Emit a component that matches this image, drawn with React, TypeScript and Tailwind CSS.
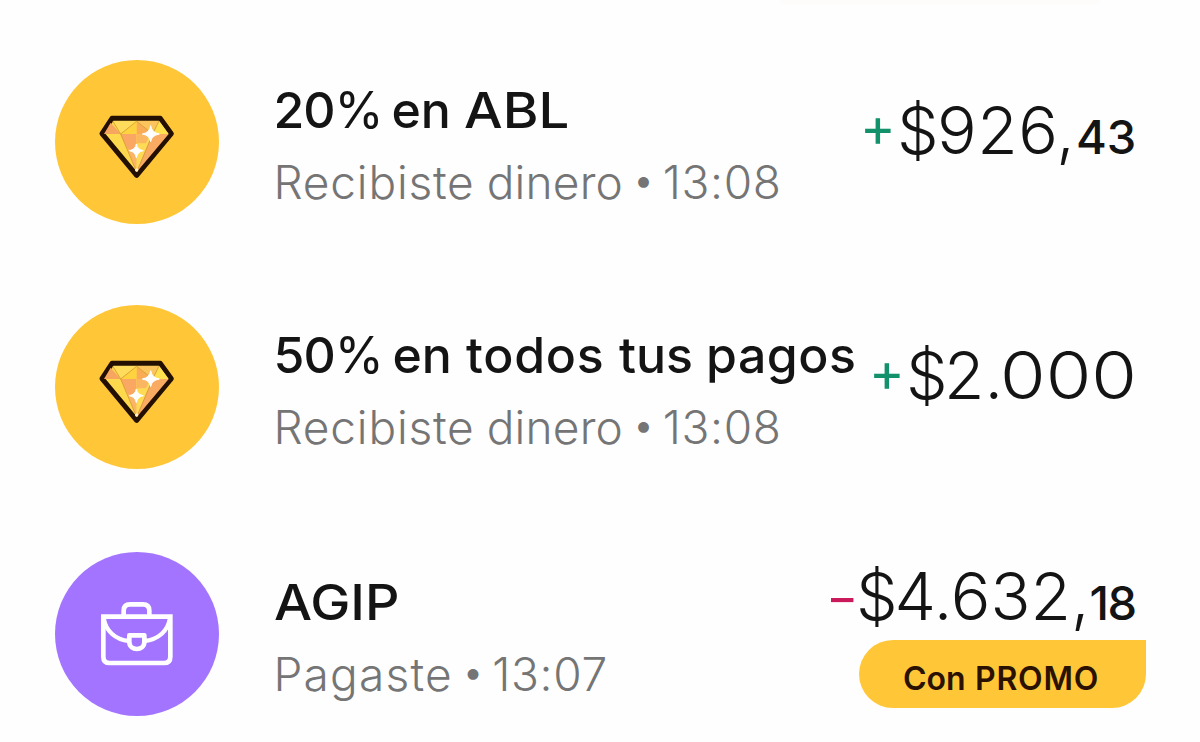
import type { ReactNode } from 'react'

function DiamondIcon() {
  return (
    <svg viewBox="0 0 285 255" className="mt-[12px] h-[85px] w-[95px]">
      <path d="M66 37H211L244 83L140 208L36 83Z" fill="#ffd94d" stroke="#241003" strokeWidth="15" strokeLinejoin="round" />
      <path d="M62 50L92 84H42Z" fill="#f7a660" />
      <path d="M70 45H140L92 84Z" fill="#ffdc5c" />
      <path d="M140 47V84H92Z" fill="#ffd23f" />
      <path d="M140 47L188 84H140Z" fill="#faab55" />
      <path d="M140 45H206L188 84Z" fill="#fbc45c" />
      <path d="M208 46L236 84H188Z" fill="#ffe04e" />
      <path d="M92 84H140V140L112 128Z" fill="#faa764" />
      <path d="M112 128L140 140V198Z" fill="#fcb568" />
      <path d="M140 84H188L140 198Z" fill="#ffdb55" />
      <path d="M140 84H182L168 112L140 112Z" fill="#fbb662" />
      <path d="M188 84H236L140 198Z" fill="#faab62" />
      <path d="M68 45L92 84L140 198L188 84L207 45M92 84L140 46L188 84" fill="none" stroke="#c98a2c" strokeWidth="2" />
      <path d="M182 59Q185 80 208 84Q185 88 182 107Q179 88 157 84Q179 80 182 59Z" fill="#fff" stroke="#fff" strokeWidth="3" />
      <path d="M139 114Q142 131 160 134Q142 137 139 155Q136 137 118 134Q136 131 139 114Z" fill="#fff" stroke="#fff" strokeWidth="3" />
      <circle cx="140" cy="192" r="5" fill="#fff3c4" />
    </svg>
  )
}

function BriefcaseIcon() {
  return (
    <svg viewBox="0 0 315 270" className="mt-[2px] h-[90px] w-[105px]" fill="none" stroke="#fff" strokeWidth="14" strokeLinejoin="round">
      <path d="M55 80H256V200Q256 219 237 219H74Q55 219 55 200Z" strokeLinejoin="miter" />
      <path d="M116 78V62Q116 43 135 43H174Q193 43 193 62V78" />
      <path d="M56 84C62 122 90 149 132 153M255 84C249 122 221 149 178 153" strokeWidth="13" />
      <path d="M133 136H178V156C178 184 133 184 133 156Z" />
    </svg>
  )
}

function Row({ height, circle, icon, title, subtitle, children }: {
  height: string
  circle: string
  icon: ReactNode
  title: ReactNode
  subtitle: ReactNode
  children: ReactNode
}) {
  return (
    <li className={`flex items-start pl-[55px] ${height}`}>
      <div className={`flex size-[164px] shrink-0 items-center justify-center rounded-full ${circle}`}>{icon}</div>
      <div className="ml-[54.5px] min-w-0 flex-1 pt-5">
        <h2 className="flex text-[50px] leading-[60px] font-medium text-[#141414]">{title}</h2>
        <p className="mt-3 flex text-[46px] leading-[60px] font-light text-[#757575]">{subtitle}</p>
      </div>
      {children}
    </li>
  )
}

const word = 'shrink-0'

function Bullet() {
  return <span className={`${word} w-[29.5px] -translate-x-px -translate-y-[2px] text-[40px]`}>•</span>
}

function Received() {
  return (
    <>
      <span className={`${word} w-[213.2px] tracking-[0.8px]`}>Recibiste</span>
      <span className={`${word} w-[146.5px] tracking-[0.2px]`}>dinero</span>
      <Bullet />
      <span className={`${word} tracking-[0.7px]`}>13:08</span>
    </>
  )
}

export default function App() {
  return (
    <main className="h-[742px] w-[1200px] overflow-hidden bg-[#fefefe] font-['Inter',sans-serif]">
      <div className="mb-[55px] ml-[780px] h-[5px] w-[320px] rounded-b bg-[#fefbfb]" />
      <ul>
        <Row
          height="h-[245px]"
          circle="bg-[#ffc737]"
          icon={<DiamondIcon />}
          title={
            <>
              <span className={`${word} w-[118px] tracking-[-1px]`}>20<span className="font-normal">%</span></span>
              <span className={`${word} w-[72px]`}>en</span>
              <span className={`${word} origin-left scale-x-[1.09]`}>ABL</span>
            </>
          }
          subtitle={<Received />}
        >
          <div className="flex h-[140px] w-[340px] shrink-0 items-baseline pt-[30px] text-[66px] leading-[80px] font-light text-[#141414]">
            <span className="w-[37px] -translate-y-[8px] text-[54px] leading-none font-normal text-[#12916a]">+</span>
            <span className="w-[40px]">$</span>
            <span className="w-[139px] tracking-[0.5px]">926,</span>
            <span className="text-[47px] leading-none font-medium">43</span>
          </div>
        </Row>
        <Row
          height="h-[247px]"
          circle="bg-[#ffc737]"
          icon={<DiamondIcon />}
          title={
            <>
              <span className={`${word} w-[119px] tracking-[-1px]`}>50<span className="font-normal">%</span></span>
              <span className={`${word} w-[73.5px]`}>en</span>
              <span className={`${word} w-[153px] tracking-[0.7px]`}>todos</span>
              <span className={`${word} w-[87px]`}>tus</span>
              <span className={`${word} tracking-[0.5px]`}>pagos</span>
            </>
          }
          subtitle={<Received />}
        >
          <div className="flex w-[331px] shrink-0 items-baseline pt-[30px] text-[66px] leading-[80px] font-light text-[#141414]">
            <span className="w-[37px] -translate-y-[8px] text-[54px] leading-none font-normal text-[#12916a]">+</span>
            <span className="w-[38px]">$</span>
            <span className="w-[55.5px]">2.</span>
            <span className="origin-left scale-x-[1.12]">000</span>
          </div>
        </Row>
        <Row
          height="h-[190px]"
          circle="bg-[#a374ff]"
          icon={<BriefcaseIcon />}
          title={<span className="origin-left scale-x-[1.075]">AGIP</span>}
          subtitle={
            <>
              <span className={`${word} w-[189.2px] tracking-[1.2px]`}>Pagaste</span>
              <Bullet />
              <span className={`${word} tracking-[0.7px]`}>13:07</span>
            </>
          }
        >
          <div className="w-[374px] shrink-0 pt-1">
            <div className="flex h-[80px] items-baseline text-[66px] leading-[80px] font-light text-[#141414]">
              <span className="w-[30px] -translate-y-[6px] text-[49px] leading-none font-normal text-[#cb1a5c]">−</span>
              <span className="w-[38.5px]">$</span>
              <span className="w-[195px]">4.632,</span>
              <span className="text-[47px] leading-none font-medium tracking-[-1.5px]">18</span>
            </div>
            <div className="mt-1 ml-[33px] flex h-[68px] w-[287px] items-center rounded-l-[34px] rounded-br-[34px] bg-[#ffc737] pt-[9px] pl-[44px] text-[32px] leading-none font-semibold text-[#2b1200]">
              <span className="w-[72px]">Con</span>
              <span className="tracking-[0.8px]">PROMO</span>
            </div>
          </div>
        </Row>
      </ul>
    </main>
  )
}
